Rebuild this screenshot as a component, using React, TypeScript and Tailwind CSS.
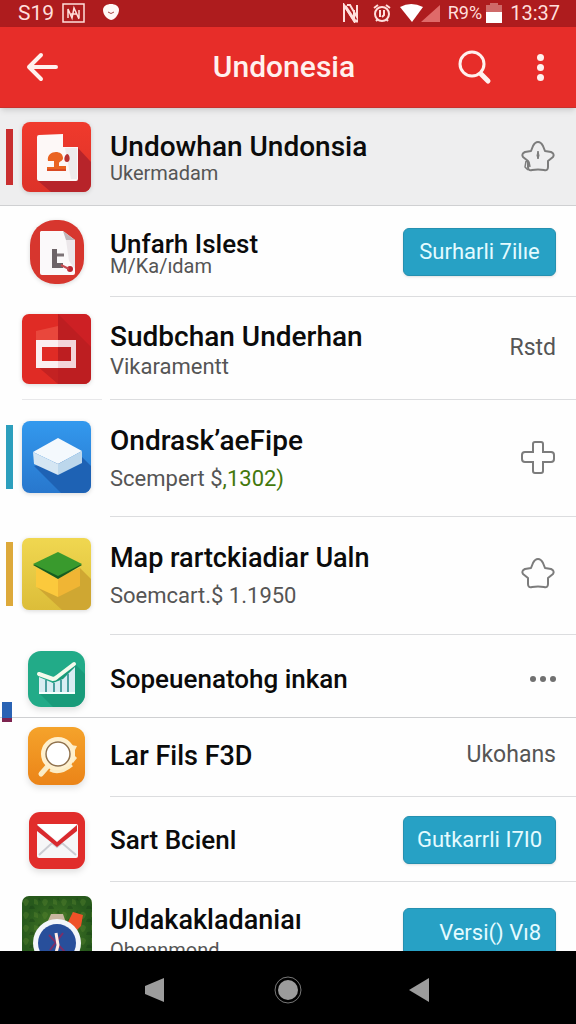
import React from "react";
import clsx from "clsx";

type Row = {
  title: string;
  subtitle?: React.ReactNode;
  icon: React.ReactNode;
  action: React.ReactNode;
  rowClass: string;
  titleClass: string;
  subtitleClass?: string;
  accent?: string;
  fullDivider?: boolean;
  iconDivider?: boolean;
  marker?: boolean;
};

function DocumentIcon() {
  return (
    <svg className="h-[72px] w-[70px] drop-shadow-sm" viewBox="0 0 70 72" aria-hidden="true">
      <defs>
        <linearGradient id="docBg" x1="0" y1="0" x2="0" y2="1">
          <stop offset="0" stopColor="#f03a2c" />
          <stop offset="1" stopColor="#dd3229" />
        </linearGradient>
      </defs>
      <rect x="0" y="1" width="69" height="70" rx="8" fill="url(#docBg)" />
      <path d="M56 27L69 41V63a8 8 0 0 1-8 8H29L15 59z" fill="#b7242a" />
      <path d="M17 14L41 13V26H56V58a2 2 0 0 1-2 2H17a2 2 0 0 1-2-2V16a2 2 0 0 1 2-2z" fill="#fdf8f7" />
      <path d="M43 27H55V58H49z" fill="#eeebec" />
      <path d="M26 40C24 29 41 28 41 37C41 40 38 40 37 42V45H44V50H25V46H32V40z" fill="#ea6422" />
      <path d="M45 33c3 0 4 8 0 8s-3-7 0-8z" fill="#b83232" />
      <path d="M25 49H44" stroke="#d94a24" strokeWidth="2" />
    </svg>
  );
}

function OvalDocumentIcon() {
  return (
    <svg className="h-[66px] w-[56px] drop-shadow-sm" viewBox="0 0 56 66" aria-hidden="true">
      <rect x="1" y="1" width="54" height="64" rx="25" fill="#d7362e" />
      <path d="M12 12H34L46 21V54a2 2 0 0 1-2 2H13a2 2 0 0 1-2-2V13z" fill="#fbf9fa" />
      <path d="M34 12L46 21H37z" fill="#bfb6ba" />
      <path d="M37 21H46V50L40 42z" fill="#ece7ea" />
      <path d="M23 30H28V44H34V49H23z" fill="#6d6468" />
      <path d="M28 36H35" stroke="#7c7276" strokeWidth="3" />
      <circle cx="41" cy="50" r="3" fill="#b92631" />
      <path d="M32 46l8 4" stroke="#c74a50" strokeWidth="2" />
    </svg>
  );
}

function SlidesIcon() {
  return (
    <svg className="h-[72px] w-[70px] drop-shadow-sm" viewBox="0 0 70 72" aria-hidden="true">
      <rect x="0" y="1" width="69" height="70" rx="7" fill="#e02b25" />
      <path d="M36 1H62a7 7 0 0 1 7 7V64a7 7 0 0 1-7 7H36z" fill="#cd2024" />
      <path d="M36 1L69 34V64a7 7 0 0 1-7 7H36L15 53H36z" fill="#b31d20" opacity="0.65" />
      <path d="M14 18L36 13V27H14z" fill="#ee5a4d" opacity="0.6" />
      <path d="M14 27H54V55H14zM20 34V48H49V34z" fill="#fbeef0" fillRule="evenodd" />
      <path d="M36 27H54V55H36V48H49V34H36z" fill="#f3d5da" />
    </svg>
  );
}

function BlueBoxIcon() {
  return (
    <svg className="h-[74px] w-[70px] drop-shadow-sm" viewBox="0 0 70 74" aria-hidden="true">
      <defs>
        <linearGradient id="blueBg" x1="0" y1="0" x2="0" y2="1">
          <stop offset="0" stopColor="#3399ee" />
          <stop offset="1" stopColor="#2877cd" />
        </linearGradient>
      </defs>
      <rect x="0" y="1" width="69" height="72" rx="8" fill="url(#blueBg)" />
      <path d="M60 37L69 46V65a8 8 0 0 1-8 8H39L12 46z" fill="#1e62b4" />
      <path d="M11 32L36 18L60 31L36 44z" fill="#f4f9fd" />
      <path d="M11 32L36 44V55L12 44z" fill="#d5e6f3" />
      <path d="M60 31V43L36 55V44z" fill="#bcd7ec" />
    </svg>
  );
}

function YellowBoxIcon() {
  return (
    <svg className="h-[74px] w-[70px] drop-shadow-sm" viewBox="0 0 70 74" aria-hidden="true">
      <defs>
        <linearGradient id="yellowBg" x1="0" y1="0" x2="0" y2="1">
          <stop offset="0" stopColor="#f0d750" />
          <stop offset="1" stopColor="#dcbd39" />
        </linearGradient>
      </defs>
      <rect x="0" y="1" width="69" height="72" rx="7" fill="url(#yellowBg)" />
      <path d="M58 31L69 42V66a7 7 0 0 1-7 7H40L15 50z" fill="#cfa732" />
      <path d="M14 31L36 41V60L14 50z" fill="#fbc93c" />
      <path d="M58 31V49L36 60V41z" fill="#f0b534" />
      <path d="M11 28L36 16L60 28L36 42z" fill="#175c20" />
      <path d="M11 27L36 15L60 27L36 39z" fill="#399a2d" />
    </svg>
  );
}

function ChartIcon() {
  return (
    <svg className="size-[58px] drop-shadow-md" viewBox="0 0 58 58" aria-hidden="true">
      <rect x="0" y="1" width="57" height="56" rx="13" fill="#22ab88" />
      <path d="M47 14L57 24V44a13 13 0 0 1-13 13H25L11 43z" fill="#169475" opacity="0.7" />
      <path d="M11 27L25 33L35 29L47 17V44H11z" fill="#d9edf3" />
      <path d="M18 30V44M26 33V44M33 30V44M40 24V44" stroke="#4b9fa0" strokeWidth="2" />
      <path d="M11 43H47" stroke="#f5fffd" strokeWidth="2" />
      <path d="M11 24L25 29Q27 29 29 27L46 14" fill="none" stroke="#f5fbec" strokeWidth="4" strokeLinejoin="round" strokeLinecap="round" />
    </svg>
  );
}

function MagnifierIcon() {
  return (
    <svg className="size-[58px] drop-shadow-md" viewBox="0 0 58 58" aria-hidden="true">
      <defs>
        <linearGradient id="orangeBg" x1="0" y1="0" x2="0" y2="1">
          <stop offset="0" stopColor="#f5a32b" />
          <stop offset="1" stopColor="#eb8418" />
        </linearGradient>
      </defs>
      <rect x="0" y="0" width="57" height="58" rx="12" fill="url(#orangeBg)" />
      <path d="M43 18l6 1-2 4v6l2 2-4 5z" fill="#fbecc5" />
      <path d="M20 39L13 47" stroke="#fbecc5" strokeWidth="5" strokeLinecap="round" />
      <circle cx="30" cy="27" r="15" fill="#fffdf5" stroke="#fff0cc" strokeWidth="4" />
      <circle cx="30" cy="27" r="12" fill="#fff" stroke="#91724b" strokeWidth="1.5" />
      <path d="M22 43q10 5 22-5" stroke="#fbecc5" strokeWidth="3" fill="none" />
    </svg>
  );
}

function MailIcon() {
  return (
    <svg className="size-[58px] drop-shadow-md" viewBox="0 0 58 58" aria-hidden="true">
      <rect x="1" y="1" width="56" height="57" rx="11" fill="#e12d2b" />
      <rect x="9" y="13" width="41" height="34" rx="2" fill="#f6f6f8" />
      <path d="M11 44L24 32L29 36L34 32L48 44" fill="none" stroke="#cbccd3" strokeWidth="2" />
      <path d="M9 13H49L29 30z" fill="#fff" />
      <path d="M9 14L29 31L49 14V20L29 36L9 20z" fill="#d9292e" />
    </svg>
  );
}

function WatchIcon() {
  return (
    <svg className="h-[72px] w-[70px]" viewBox="0 0 70 72" aria-hidden="true">
      <defs>
        <radialGradient id="grass">
          <stop offset="0" stopColor="#4b7d27" />
          <stop offset="1" stopColor="#27591c" />
        </radialGradient>
        <pattern id="leaves" width="19" height="13" patternUnits="userSpaceOnUse">
          <path d="M1 6Q3 0 7 5Q6 10 3 10zM12 3Q17 3 16 9L12 8z" fill="#5d8a31" opacity="0.35" />
          <path d="M8 10Q12 8 13 13H7zM17 1l2 4-3-1z" fill="#163f13" opacity="0.4" />
        </pattern>
      </defs>
      <rect x="0" y="0" width="70" height="71" rx="7" fill="url(#grass)" />
      <rect x="0" y="0" width="70" height="71" rx="7" fill="url(#leaves)" />
      <path d="M29 18h12l3 9H25z" fill="#c9b6a0" />
      <path d="M51 16l10 3-2 11-5 5-9-7z" fill="#ef5128" />
      <circle cx="35" cy="47" r="24" fill="#f3f6fa" />
      <circle cx="35" cy="47" r="19" fill="#284f9b" />
      <path d="M27 39l16 17M28 54l13-17" stroke="#7c2f68" strokeWidth="2" />
      <path d="M34 37l2 12-2 8" stroke="#ffebe5" strokeWidth="3" fill="none" />
    </svg>
  );
}

function StarButton({ label, marked }: { label: string; marked?: boolean }) {
  return (
    <button type="button" aria-label={label} className="text-[#7c7c7c]">
      <svg className="h-9 w-9" viewBox="0 0 36 36" fill="none" stroke="currentColor" strokeWidth="2" strokeLinejoin="round">
        <path d="M13 7Q15 3 18 3Q21 3 23 7L25 12L31 13Q35 15 33 18L28 22L28 28Q28 32 24 31Q18 30 12 31Q8 32 8 28L8 22L3 18Q1 15 5 13L11 12z" />
        {marked && <path d="M18 12Q16 17 18 20Q20 17 18 12" fill="currentColor" strokeWidth="1" />}
        {marked && <path d="M6 22L9 23L10 28M6 22L5 28L8 31" strokeWidth="1.5" />}
      </svg>
    </button>
  );
}

function PlusButton() {
  return (
    <button type="button" aria-label="Add" className="text-[#7c7c7c]">
      <svg className="h-9 w-9" viewBox="0 0 36 36" fill="none" stroke="currentColor" strokeWidth="2">
        <path d="M15 3H21Q23 3 23 5V13H31Q34 13 34 16V20Q34 23 31 23H23V32Q23 34 21 34H15Q13 34 13 32V23H5Q2 23 2 20V16Q2 13 5 13H13V5Q13 3 15 3z" />
      </svg>
    </button>
  );
}

function MoreButton() {
  return (
    <button type="button" aria-label="More" className="flex gap-1 text-[#707070]">
      <span className="size-1.5 rounded-full bg-current" />
      <span className="size-1.5 rounded-full bg-current" />
      <span className="size-1.5 rounded-full bg-current" />
    </button>
  );
}

function ActionButton({ children, alignEnd }: { children: React.ReactNode; alignEnd?: boolean }) {
  return (
    <button
      type="button"
      className={clsx(
        "flex h-12 w-[153px] items-center whitespace-nowrap rounded-md border border-[#2590b0] bg-[#27a1c5] px-[14px] text-[22px] text-[#e4fbff] shadow-sm",
        alignEnd ? "justify-end" : "justify-center"
      )}
    >
      {children}
    </button>
  );
}

const rows: Row[] = [
  {
    title: "Undowhan Undonsia",
    subtitle: "Ukermadam",
    icon: <DocumentIcon />,
    action: <StarButton label="Add to favourites" marked />,
    rowClass: "min-h-[98px] bg-[#eeeeef]",
    titleClass: "text-[28px] leading-7",
    subtitleClass: "text-xl leading-6",
    accent: "h-14 bg-[#c92f30]",
    fullDivider: true,
  },
  {
    title: "Unfarh Islest",
    subtitle: "M/Ka/ıdam",
    icon: <OvalDocumentIcon />,
    action: <ActionButton>Surharli 7ilıe</ActionButton>,
    rowClass: "min-h-[91px]",
    titleClass: "text-[26px] leading-6",
    subtitleClass: "text-xl leading-5",
  },
  {
    title: "Sudbchan Underhan",
    subtitle: "Vikaramentt",
    icon: <SlidesIcon />,
    action: <span className="text-[23px] text-[#555]">Rstd</span>,
    rowClass: "min-h-[103px]",
    titleClass: "text-[28px] leading-7",
    subtitleClass: "mt-1 text-[22px] leading-6",
    iconDivider: true,
  },
  {
    title: "Ondrask’aeFipe",
    subtitle: (
      <>
        Scempert $<span className="text-[#43780b]">,1302)</span>
      </>
    ),
    icon: <BlueBoxIcon />,
    action: <PlusButton />,
    rowClass: "min-h-[117px] pb-1",
    titleClass: "text-[28px] leading-7",
    subtitleClass: "mt-3 text-[22px] leading-6",
    accent: "h-16 bg-[#2d9fbd]",
  },
  {
    title: "Map rartckiadiar Ualn",
    subtitle: "Soemcart.$ 1.1950",
    icon: <YellowBoxIcon />,
    action: <StarButton label="Save map" />,
    rowClass: "min-h-[118px] pb-1",
    titleClass: "text-[27px] leading-7",
    subtitleClass: "mt-3 text-[22px] leading-6",
    accent: "h-16 bg-[#dda93a]",
  },
  {
    title: "Sopeuenatohg inkan",
    icon: <ChartIcon />,
    action: <MoreButton />,
    rowClass: "min-h-[83px] pt-1",
    titleClass: "text-[26px] leading-7",
    fullDivider: true,
    marker: true,
  },
  {
    title: "Lar Fils F3D",
    icon: <MagnifierIcon />,
    action: <span className="text-[23px] text-[#555]">Ukohans</span>,
    rowClass: "min-h-[79px] pb-1",
    titleClass: "text-[27px] leading-7",
  },
  {
    title: "Sart Bcienl",
    icon: <MailIcon />,
    action: <ActionButton>Gutkarrli I7I0</ActionButton>,
    rowClass: "min-h-[85px]",
    titleClass: "text-[26px] leading-7",
  },
  {
    title: "Uldakakladaniaı",
    subtitle: "Ohonnmond",
    icon: <WatchIcon />,
    action: <ActionButton alignEnd>Versi() Vı8</ActionButton>,
    rowClass: "min-h-[104px] pb-1",
    titleClass: "text-[27px] leading-7",
    subtitleClass: "mt-1 text-xl leading-6",
  },
];

function ListRow({ row }: { row: Row }) {
  return (
    <li className="relative shrink-0">
      <div className={clsx("flex items-center pr-5", row.rowClass)}>
        <div className="flex w-[110px] shrink-0 items-center pl-[6px]">
          <span className={clsx("w-[7px] shrink-0", row.accent)} />
          <div className="flex flex-1 justify-center pr-[10px]">{row.icon}</div>
        </div>
        <div className={clsx("min-w-0 flex-1", row.subtitle && "pt-1")}>
          <h2 className={clsx("whitespace-nowrap font-medium text-[#0b0b0b]", row.titleClass)}>
            {row.title}
          </h2>
          {row.subtitle && (
            <p className={clsx("whitespace-nowrap text-[#555]", row.subtitleClass)}>
              {row.subtitle}
            </p>
          )}
        </div>
        <div className="flex shrink-0 items-center">{row.action}</div>
      </div>
      <div
        className={clsx(
          "absolute bottom-0 right-0 h-px",
          row.fullDivider ? "left-0 bg-[#cfd0d2]" : "left-[110px] bg-[#dcdddf]"
        )}
      />
      {row.iconDivider && <div className="absolute bottom-0 left-[22px] h-px w-20 bg-[#e8e8ea]" />}
      {row.marker && (
        <div className="absolute -bottom-1 left-[2px] z-10 h-5 w-[10px] border-b-4 border-[#7d2450] bg-[#2a63b4]" />
      )}
    </li>
  );
}

function StatusBar() {
  return (
    <div className="flex h-[27px] shrink-0 items-center justify-between bg-[#ae1c1e] pb-[2px] pl-[18px] pr-4 text-[#ffdfdc]">
      <div className="flex items-center gap-2">
        <span className="text-[21px] leading-6">S19</span>
        <svg className="h-5 w-6" viewBox="0 0 24 20" fill="none" stroke="currentColor" strokeWidth="1.5" aria-hidden="true">
          <rect x="1" y="1" width="21" height="18" />
          <path d="M6 15V6l4 9 2-10 5 11M9 11h6M17 15V7" />
        </svg>
        <svg className="ml-2 h-5 w-[18px]" viewBox="0 0 18 20" aria-hidden="true">
          <path d="M9 1C13 1 17 3 17 7C17 12 12 17 9 17C5 16 1 12 1 7C1 3 5 1 9 1z" fill="#fff8f6" />
          <path d="M6 9q3 3 6 0" fill="none" stroke="#a94444" />
        </svg>
      </div>
      <div className="flex items-center gap-2">
        <svg className="h-5 w-[18px]" viewBox="0 0 18 20" fill="none" stroke="currentColor" aria-hidden="true">
          <path d="M2 19V2L12 18V7M5 2H8L15 14V2" strokeWidth="2" />
          <path d="M3 3L13 18H16" strokeWidth="3" />
        </svg>
        <svg className="ml-1 h-5 w-5" viewBox="0 0 20 20" fill="none" stroke="currentColor" strokeWidth="2" aria-hidden="true">
          <circle cx="10" cy="11" r="7" />
          <path d="M2 5l4-3M18 5l-4-3M4 18l2-2M16 18l-2-2M8 7v7M12 7v5l-2 2" />
        </svg>
        <svg className="h-5 w-10" viewBox="0 0 40 20" aria-hidden="true">
          <path d="M0 4Q11-2 23 4L12 19z" fill="#fff" />
          <path d="M40 2V19H21z" fill="#df6a69" />
        </svg>
        <span className="text-lg leading-6">R9%</span>
        <svg className="-ml-1 h-5 w-4" viewBox="0 0 16 20" aria-hidden="true">
          <path d="M4 0H12V2H16V9H0V2H4z" fill="#cf6a69" />
          <path d="M0 9H16V20H0z" fill="#fff" />
        </svg>
        <span className="text-xl leading-6">13:37</span>
      </div>
    </div>
  );
}

function Header() {
  return (
    <header className="relative z-10 grid h-[81px] shrink-0 grid-cols-[1fr_auto_1fr] items-center border-b border-[#c9302c] bg-[#e72d29] pl-4 pr-6 text-[#fff1ee] shadow-md">
      <button type="button" aria-label="Back" className="justify-self-start pl-2">
        <svg className="h-9 w-9" viewBox="0 0 36 36" fill="none" stroke="currentColor" strokeWidth="4" strokeLinecap="round" strokeLinejoin="round">
          <path d="M17 6L5 18L17 30M5 18H32" />
        </svg>
      </button>
      <h1 className="text-[30px] font-medium leading-10">Undonesia</h1>
      <div className="flex items-center gap-9 justify-self-end">
        <button type="button" aria-label="Search">
          <svg className="h-9 w-9" viewBox="0 0 36 36" fill="none" stroke="currentColor" strokeWidth="3" strokeLinecap="round">
            <circle cx="16" cy="15" r="12" />
            <path d="M25 25L32 32" strokeWidth="5" />
          </svg>
        </button>
        <button type="button" aria-label="Menu" className="flex w-6 flex-col items-center gap-[3px]">
          <span className="size-[7px] rounded-full bg-current" />
          <span className="size-[7px] rounded-full bg-current" />
          <span className="size-[7px] rounded-full bg-current" />
        </button>
      </div>
    </header>
  );
}

function NavigationBar() {
  return (
    <nav className="flex h-[73px] shrink-0 items-center justify-around bg-black px-[88px] pt-1 text-[#9c9c9c]">
      <button type="button" aria-label="Back">
        <svg className="h-7 w-7" viewBox="0 0 28 28" fill="currentColor">
          <path d="M23 2V26L4 18V10z" />
        </svg>
      </button>
      <button type="button" aria-label="Home">
        <svg className="h-7 w-7" viewBox="0 0 28 28">
          <circle cx="14" cy="14" r="13" fill="none" stroke="#777" strokeWidth="1" />
          <circle cx="14" cy="14" r="10" fill="currentColor" />
        </svg>
      </button>
      <button type="button" aria-label="Previous">
        <svg className="h-7 w-7" viewBox="0 0 28 28" fill="currentColor">
          <path d="M22 2V26L2 14z" />
        </svg>
      </button>
    </nav>
  );
}

export default function App() {
  return (
    <div className="flex h-screen flex-col overflow-hidden bg-white font-[Roboto,'Liberation_Sans',sans-serif]">
      <StatusBar />
      <Header />
      <main className="min-h-0 flex-1 overflow-hidden bg-[#fefefe]">
        <ul className="flex flex-col">
          {rows.map((row) => (
            <ListRow key={row.title} row={row} />
          ))}
        </ul>
      </main>
      <NavigationBar />
    </div>
  );
}
